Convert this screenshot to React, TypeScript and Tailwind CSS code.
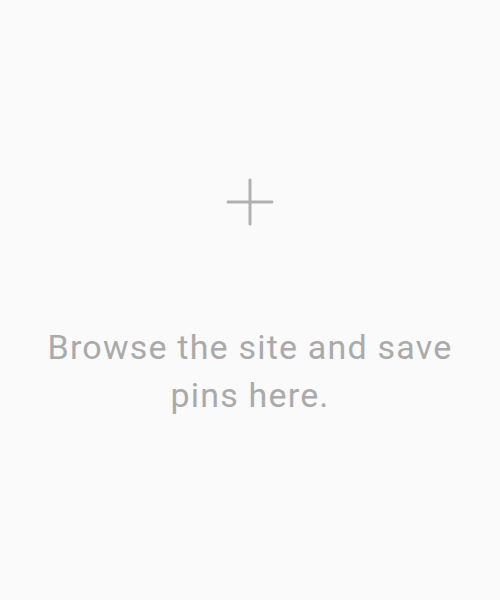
export default function App() {
  return (
    <div className="flex h-[600px] w-[500px] flex-col items-center bg-[#fafafa] font-['Roboto',sans-serif]">
      <div className="mt-[177px] flex h-[50px] w-[50px] items-center justify-center">
        <svg width="48" height="48" viewBox="0 0 48 48" fill="none">
          <path d="M24 2v44M2 24h44" stroke="#b0b0b0" strokeWidth="3" strokeLinecap="round" />
        </svg>
      </div>
      <p className="mt-[96px] px-8 text-center text-[34px] leading-[48px] tracking-[1.2px] text-[#aaaaaa]">
        Browse the site and save pins here.
      </p>
    </div>
  );
}
